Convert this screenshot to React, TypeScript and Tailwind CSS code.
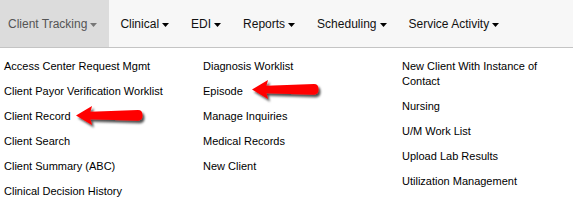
import React from "react";

const Caret = ({ color }: { color: string }) => (
  <svg width="7" height="4" viewBox="0 0 7 4" className="ml-[3px] mt-[2px]">
    <polygon points="0,0 7,0 3.5,4" fill={color} />
  </svg>
);

const Arrow = ({ className, id }: { className: string; id: string }) => (
  <svg width="78" height="30" viewBox="0 0 78 30" className={className}>
    <defs>
      <filter id={id} x="-10%" y="-20%" width="130%" height="160%">
        <feDropShadow dx="2" dy="2.5" stdDeviation="1.2" floodColor="#000" floodOpacity="0.7" />
      </filter>
    </defs>
    <path
      d="M2 11.5 L18 2 L16.5 7.7 L64 6 Q68.5 6 68.5 11.3 Q68.5 16.7 64 16.7 L16.5 15.3 L18 21 Z"
      fill="#ff0000"
      filter={`url(#${id})`}
    />
  </svg>
);

const navItems = ["Clinical", "EDI", "Reports", "Scheduling", "Service Activity"];

const col1 = [
  "Access Center Request Mgmt",
  "Client Payor Verification Worklist",
  "Client Record",
  "Client Search",
  "Client Summary (ABC)",
  "Clinical Decision History",
];
const col2 = ["Diagnosis Worklist", "Episode", "Manage Inquiries", "Medical Records", "New Client"];
const col3 = [
  "New Client With Instance of Contact",
  "Nursing",
  "U/M Work List",
  "Upload Lab Results",
  "Utilization Management",
];

const Col = ({ items }: { items: string[] }) => (
  <div className="flex flex-col pl-[4px]">
    {items.map((t) => (
      <div key={t} className="py-[5px] leading-[15px] text-[11px] text-black">
        {t}
      </div>
    ))}
  </div>
);

export default function App() {
  return (
    <div
      className="relative w-[573px] h-[204px] bg-white overflow-hidden"
      style={{ fontFamily: '"Liberation Sans", Arial, sans-serif' }}
    >
      <div className="flex h-[48px] bg-[#f7f7f7] border-b border-[#c4c4c4] text-[12px] leading-[20px]">
        <div className="flex items-center bg-[#dcdcdc] pl-[8px] pr-[12px] text-[#555]">
          <span>Client Tracking</span>
          <Caret color="#777" />
        </div>
        {navItems.map((n) => (
          <div key={n} className="flex items-center px-[11px] text-[#111]">
            <span>{n}</span>
            <Caret color="#000" />
          </div>
        ))}
      </div>
      <div className="grid grid-cols-[199px_199px_1fr] pt-[6px]">
        <Col items={col1} />
        <Col items={col2} />
        <Col items={col3} />
      </div>
      <Arrow id="a1" className="absolute left-[74px] top-[104px]" />
      <Arrow id="a2" className="absolute left-[250px] top-[78px]" />
    </div>
  );
}
